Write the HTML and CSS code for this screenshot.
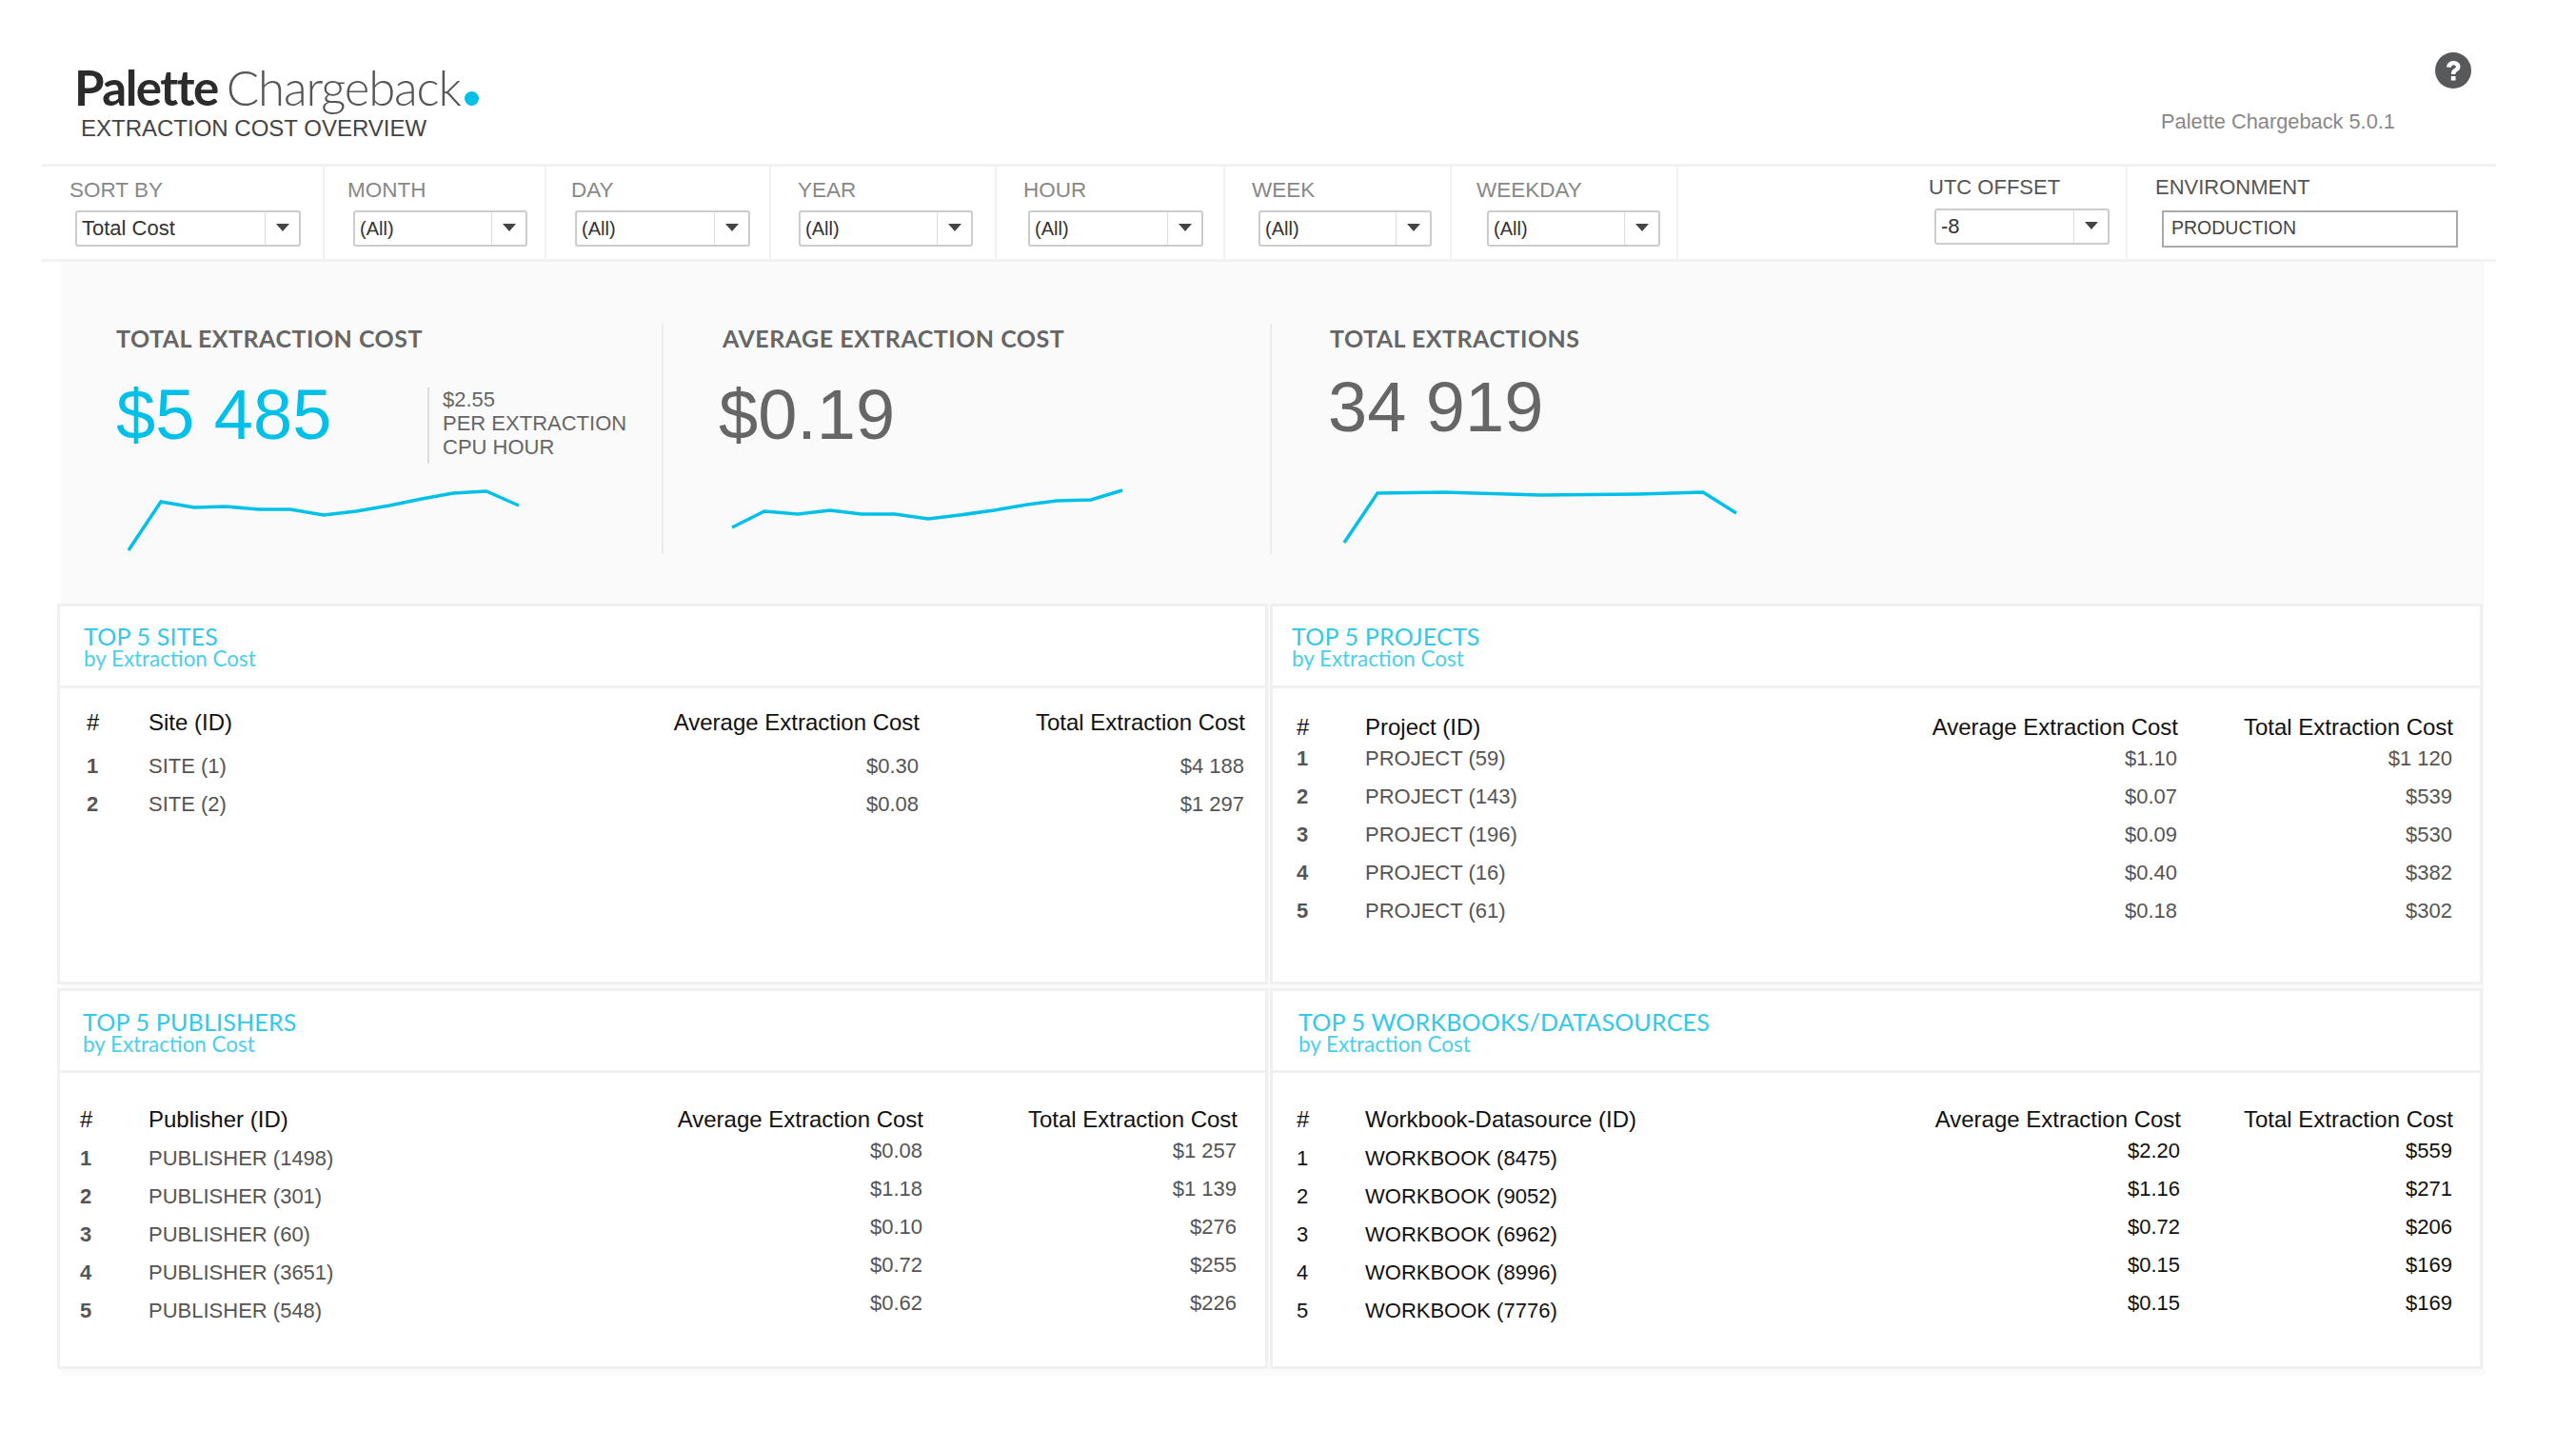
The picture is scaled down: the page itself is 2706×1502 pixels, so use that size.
FILE: index.html
```html
<!DOCTYPE html>
<html lang="en">
<head>
    <meta charset="UTF-8">
    <meta name="viewport" content="width=device-width, initial-scale=1.0">
    <title>Palette Chargeback</title>
    <link rel="stylesheet" href="styles.css">
</head>
<body>

<header class="top">
    <div class="brand">
        <div class="logo"><b>Palette</b><span class="logo-light">Chargeback</span><i class="logo-dot"></i></div>
        <div class="subtitle">EXTRACTION COST OVERVIEW</div>
    </div>
    <div class="about">
        <svg class="help" viewBox="0 0 38 38">
            <circle cx="19" cy="19" r="19" fill="#58595b"/>
            <path d="M12 15.5c.4-4 3.300-6.500 7.300-6.500 4.200 0 7.200 2.600 7.200 6 0 2.700-1.600 4-3.300 5.100-1.200.8-1.700 1.300-1.700 2.900h-4.600c0-3 .9-4.400 2.900-5.700 1.300-.8 2-1.400 2-2.300 0-1-.9-1.700-2.300-1.700-1.500 0-2.400.9-2.700 2.500z" fill="#fff"/>
            <rect x="16.800" y="25" width="4.800" height="4.600" rx=".6" fill="#fff"/>
        </svg>
        <div class="version">Palette Chargeback 5.0.1</div>
    </div>
</header>

<!-- filter bar -->
<div class="filters">
    <div class="filter f-sort">
        <div class="filter-label">SORT BY</div>
        <div class="select"><span class="select-text big">Total Cost</span><span class="select-arrow"></span></div>
    </div>
    <div class="filter f-month">
        <div class="filter-label">MONTH</div>
        <div class="select"><span class="select-text">(All)</span><span class="select-arrow"></span></div>
    </div>
    <div class="filter f-day">
        <div class="filter-label">DAY</div>
        <div class="select"><span class="select-text">(All)</span><span class="select-arrow"></span></div>
    </div>
    <div class="filter f-year">
        <div class="filter-label">YEAR</div>
        <div class="select"><span class="select-text">(All)</span><span class="select-arrow"></span></div>
    </div>
    <div class="filter f-hour">
        <div class="filter-label">HOUR</div>
        <div class="select"><span class="select-text">(All)</span><span class="select-arrow"></span></div>
    </div>
    <div class="filter f-week">
        <div class="filter-label">WEEK</div>
        <div class="select"><span class="select-text">(All)</span><span class="select-arrow"></span></div>
    </div>
    <div class="filter f-weekday">
        <div class="filter-label">WEEKDAY</div>
        <div class="select"><span class="select-text">(All)</span><span class="select-arrow"></span></div>
    </div>
    <div class="filter f-utc">
        <div class="filter-label dark">UTC OFFSET</div>
        <div class="select"><span class="select-text big">-8</span><span class="select-arrow"></span></div>
    </div>
    <div class="filter f-env">
        <div class="filter-label dark">ENVIRONMENT</div>
        <div class="env-input">PRODUCTION</div>
    </div>
</div>

<main class="panel">
    <!-- kpis -->
    <section class="kpis">
        <div class="kpi kpi-total">
            <div class="kpi-title">TOTAL EXTRACTION COST</div>
            <div class="kpi-row">
                <div class="kpi-value cyan">$5 485</div>
                <div class="kpi-note">$2.55<br>PER EXTRACTION<br>CPU HOUR</div>
            </div>
            <svg class="spark" viewBox="0 0 520 75">
                <polyline points="13,68 47,17 82,23 115,22 150,25 183,25 218,31 252,27 287,21 321,14 354,8 389,6 423,21"/>
            </svg>
        </div>
        <div class="kpi kpi-avg">
            <div class="kpi-title">AVERAGE EXTRACTION COST</div>
            <div class="kpi-value">$0.19</div>
            <svg class="spark" viewBox="0 0 520 75">
                <polyline points="10,45 44,28 79,31 113,27 146,31 181,31 216,36 249,32 285,27 320,21 351,17 387,16 420,6"/>
            </svg>
        </div>
        <div class="kpi kpi-count">
            <div class="kpi-title">TOTAL EXTRACTIONS</div>
            <div class="kpi-value">34 919</div>
            <svg class="spark" viewBox="0 0 520 75">
                <polyline points="15,59 50,7 120,6 222,9 324,8 392,6 427,28"/>
            </svg>
        </div>
    </section>

    <section class="cards">
        <div class="card card-sites">
            <div class="card-head">
                <div class="card-title">TOP 5 SITES</div>
                <div class="card-sub">by Extraction Cost</div>
            </div>
            <div class="tbl">
                <div class="th">#</div><div class="th">Site (ID)</div><div class="th num">Average Extraction Cost</div><div class="th num">Total Extraction Cost</div>
                <div class="td rank">1</div><div class="td">SITE (1)</div><div class="td num">$0.30</div><div class="td num">$4 188</div>
                <div class="td rank">2</div><div class="td">SITE (2)</div><div class="td num">$0.08</div><div class="td num">$1 297</div>
            </div>
        </div>

        <div class="card card-projects">
            <div class="card-head">
                <div class="card-title">TOP 5 PROJECTS</div>
                <div class="card-sub">by Extraction Cost</div>
            </div>
            <div class="tbl">
                <div class="th">#</div><div class="th">Project (ID)</div><div class="th num">Average Extraction Cost</div><div class="th num">Total Extraction Cost</div>
                <div class="td rank">1</div><div class="td">PROJECT (59)</div><div class="td num">$1.10</div><div class="td num">$1 120</div>
                <div class="td rank">2</div><div class="td">PROJECT (143)</div><div class="td num">$0.07</div><div class="td num">$539</div>
                <div class="td rank">3</div><div class="td">PROJECT (196)</div><div class="td num">$0.09</div><div class="td num">$530</div>
                <div class="td rank">4</div><div class="td">PROJECT (16)</div><div class="td num">$0.40</div><div class="td num">$382</div>
                <div class="td rank">5</div><div class="td">PROJECT (61)</div><div class="td num">$0.18</div><div class="td num">$302</div>
            </div>
        </div>

        <div class="card card-publishers">
            <div class="card-head">
                <div class="card-title">TOP 5 PUBLISHERS</div>
                <div class="card-sub">by Extraction Cost</div>
            </div>
            <div class="tbl">
                <div class="th">#</div><div class="th">Publisher (ID)</div><div class="th num">Average Extraction Cost</div><div class="th num">Total Extraction Cost</div>
                <div class="td rank">1</div><div class="td">PUBLISHER (1498)</div><div class="td num">$0.08</div><div class="td num">$1 257</div>
                <div class="td rank">2</div><div class="td">PUBLISHER (301)</div><div class="td num">$1.18</div><div class="td num">$1 139</div>
                <div class="td rank">3</div><div class="td">PUBLISHER (60)</div><div class="td num">$0.10</div><div class="td num">$276</div>
                <div class="td rank">4</div><div class="td">PUBLISHER (3651)</div><div class="td num">$0.72</div><div class="td num">$255</div>
                <div class="td rank">5</div><div class="td">PUBLISHER (548)</div><div class="td num">$0.62</div><div class="td num">$226</div>
            </div>
        </div>

        <div class="card card-workbooks">
            <div class="card-head">
                <div class="card-title">TOP 5 WORKBOOKS/DATASOURCES</div>
                <div class="card-sub">by Extraction Cost</div>
            </div>
            <div class="tbl">
                <div class="th">#</div><div class="th">Workbook-Datasource (ID)</div><div class="th num">Average Extraction Cost</div><div class="th num">Total Extraction Cost</div>
                <div class="td rank">1</div><div class="td">WORKBOOK (8475)</div><div class="td num">$2.20</div><div class="td num">$559</div>
                <div class="td rank">2</div><div class="td">WORKBOOK (9052)</div><div class="td num">$1.16</div><div class="td num">$271</div>
                <div class="td rank">3</div><div class="td">WORKBOOK (6962)</div><div class="td num">$0.72</div><div class="td num">$206</div>
                <div class="td rank">4</div><div class="td">WORKBOOK (8996)</div><div class="td num">$0.15</div><div class="td num">$169</div>
                <div class="td rank">5</div><div class="td">WORKBOOK (7776)</div><div class="td num">$0.15</div><div class="td num">$169</div>
            </div>
        </div>
    </section>
</main>

</body>
</html>
```

FILE: styles.css
```css
body {
    font-family: "Liberation Sans", Arial, sans-serif;
    background-color: #fff;
    color: #555;
    margin: 0;
    width: 2706px;
    height: 1502px;
    overflow: hidden;
}

/* header */
.top {
    display: flex;
    justify-content: space-between;
    height: 172px;
    box-sizing: border-box;
}
.brand {
    padding: 62px 0 0 78px;
}
.logo {
    display: flex;
    align-items: baseline;
    font-family: Lato, sans-serif;
    font-size: 51px;
    line-height: 60px;
    color: #2b2b2b;
    letter-spacing: -1.5px;
}
.logo b {
    font-weight: 700;
}
.logo-light {
    font-weight: 300;
    color: #555;
    margin-left: 9px;
    letter-spacing: -1.2px;
}
.logo-dot {
    width: 15px;
    height: 15px;
    margin-left: 5px;
    border-radius: 50%;
    background-color: #00c0e8;
}
.subtitle {
    margin: -1px 0 0 7px;
    font-size: 24px;
    line-height: 28px;
    color: #444;
}
.about {
    width: 436px;
    padding-top: 55px;
    box-sizing: border-box;
}
.help {
    display: block;
    width: 38px;
    height: 38px;
    margin-left: 288px;
}
.version {
    margin: 22px 0 0;
    font-size: 21.800px;
    color: #888;
}

/* filters */
.filters {
    display: flex;
    height: 103px;
    width: 2578px;
    margin-left: 44px;
    box-sizing: border-box;
    border-top: 3px solid #f2f2f2;
    border-bottom: 3px solid #f2f2f2;
}
.filter {
    box-sizing: border-box;
    border-right: 2px solid #f2f2f2;
    padding-top: 12px;
}
.filter-label {
    font-size: 22.500px;
    line-height: 26px;
    color: #888;
}
.filter-label.dark {
    color: #555;
    font-size: 22px;
}
.select {
    display: flex;
    height: 38px;
    margin-top: 8px;
    box-sizing: border-box;
    border: 2px solid #ccc;
    border-radius: 3px;
    background-color: #fff;
}
.select-text {
    flex: 1;
    padding-left: 5px;
    font-size: 20px;
    line-height: 34px;
    color: #333;
}
.select-text.big {
    font-size: 22px;
}
.select-arrow {
    width: 35px;
    position: relative;
    border-left: 1px solid #ddd;
}
.select-arrow::after {
    content: "";
    position: absolute;
    left: 11px;
    top: 12px;
    border-style: solid;
    border-width: 8px 7px 0;
    border-color: #444 transparent transparent;
}
.f-sort { width: 297px; padding-left: 29px; }
.f-sort .select { width: 237px; margin-left: 6px; }
.f-month { width: 233px; padding-left: 24px; }
.f-month .select { width: 183px; margin-left: 6px; }
.f-day { width: 236px; padding-left: 26px; }
.f-day .select { width: 184px; margin-left: 4px; }
.f-year { width: 237px; padding-left: 28px; }
.f-year .select { width: 183px; margin-left: 1px; }
.f-hour { width: 240px; padding-left: 28px; }
.f-hour .select { width: 184px; margin-left: 5px; }
.f-week { width: 238px; padding-left: 28px; }
.f-week .select { width: 182px; margin-left: 7px; }
.f-weekday { width: 238px; padding-left: 26px; }
.f-weekday .select { width: 182px; margin-left: 11px; }
.f-utc { margin-left: auto; width: 209px; padding-top: 9px; }
.f-utc .select { width: 184px; margin-left: 6px; margin-top: 9px; }
.f-env { width: 387px; padding-top: 9px; padding-left: 29px; border-right: 0; }
.env-input {
    width: 311px;
    height: 39px;
    margin: 11px 0 0 7px;
    box-sizing: border-box;
    border: 2px solid #aaa;
    padding-left: 8px;
    font-size: 19.500px;
    line-height: 32px;
    color: #444;
}

/* grey panel behind kpis and cards */
.panel {
    width: 2546px;
    height: 1170px;
    margin-left: 64px;
    background-color: #fafafa;
}
.kpis {
    display: flex;
    height: 359px;
    padding-top: 65px;
    box-sizing: border-box;
}
.kpi {
    box-sizing: border-box;
    height: 242px;
    border-right: 2px solid #ececec;
    padding-left: 58px;
}
.kpi-total { width: 633px; }
.kpi-avg { width: 639px; padding-left: 62px; }
.kpi-count { width: 700px; padding-left: 61px; border-right: 0; }
.kpi-title {
    font-family: Lato, sans-serif;
    font-weight: 700;
    font-size: 25px;
    line-height: 30px;
    letter-spacing: .5px;
    color: #666;
    white-space: nowrap;
}
.kpi-row {
    display: flex;
}
.kpi-value {
    margin-top: 24px;
    font-size: 74px;
    line-height: 84px;
    color: #666;
    white-space: nowrap;
}
.kpi-avg .kpi-value { margin-left: -4px; }
.kpi-count .kpi-value { margin-top: 16px; margin-left: -2px; }
.kpi-value.cyan {
    color: #00c0e8;
    width: 327px;
}
.kpi-note {
    align-self: flex-start;
    margin-top: 37px;
    padding: 0 0 5px 14px;
    border-left: 2px solid #ddd;
    font-size: 22px;
    line-height: 25px;
    color: #666;
    white-space: nowrap;
}
.spark {
    display: block;
    width: 520px;
    height: 75px;
    fill: none;
    stroke: #00c0e8;
    stroke-width: 3.500;
    overflow: visible;
}
.kpi-total .spark { margin-top: 23px; }
.kpi-avg .spark { margin-top: 31px; }
.kpi-count .spark { margin-top: 41px; }

/* cards */
.cards {
    display: grid;
    grid-template-columns: 1272px 1274px;
    grid-template-rows: 400px 400px;
    column-gap: 2px;
    row-gap: 4px;
    margin-left: -4px;
}
.card {
    box-sizing: border-box;
    border: 3px solid #f0f0f0;
    background-color: #fff;
}
.card-head {
    height: 86px;
    box-sizing: border-box;
    padding: 17px 0 0 25px;
    border-bottom: 3px solid #f0f0f0;
}
.card-title {
    font-family: Lato, sans-serif;
    font-size: 25px;
    line-height: 28px;
    letter-spacing: .2px;
    color: #33c8e8;
    white-space: nowrap;
}
.card-sub {
    font-family: Lato, sans-serif;
    font-size: 22.400px;
    line-height: 20px;
    color: #4acfec;
}

/* tables */
.tbl {
    display: grid;
    grid-auto-rows: 40px;
}
.th {
    font-size: 24px;
    line-height: 40px;
    color: #111;
    white-space: nowrap;
}
.td {
    font-size: 22px;
    line-height: 40px;
    color: #555;
    white-space: nowrap;
}
.num {
    text-align: right;
}
.td.num {
    padding-right: 1px;
}
.rank {
    font-weight: 700;
}

.card-sites .tbl {
    grid-template-columns: 65px 400px 410px 342px;
    grid-template-rows: 46px 40px 40px;
    padding: 16px 0 0 28px;
}
.card-projects .card-head { padding-left: 20px; }
.card-projects .tbl {
    grid-template-columns: 72px 400px 454px 289px;
    grid-template-rows: 33px;
    padding: 21px 0 0 25px;
}
.card-publishers .card-head { padding-left: 24px; padding-top: 18px; }
.card-publishers .tbl {
    grid-template-columns: 72px 400px 414px 330px;
    grid-template-rows: 41px;
    padding: 29px 0 0 21px;
}
.card-workbooks .card-head { padding-left: 27px; padding-top: 18px; }
.card-workbooks .tbl {
    grid-template-columns: 72px 400px 457px 286px;
    grid-template-rows: 41px;
    padding: 29px 0 0 25px;
}
.card-publishers .td.num,
.card-workbooks .td.num {
    margin-top: -8px;
}
.card-workbooks .td {
    color: #111;
}
.card-workbooks .rank {
    font-weight: 400;
}
```
